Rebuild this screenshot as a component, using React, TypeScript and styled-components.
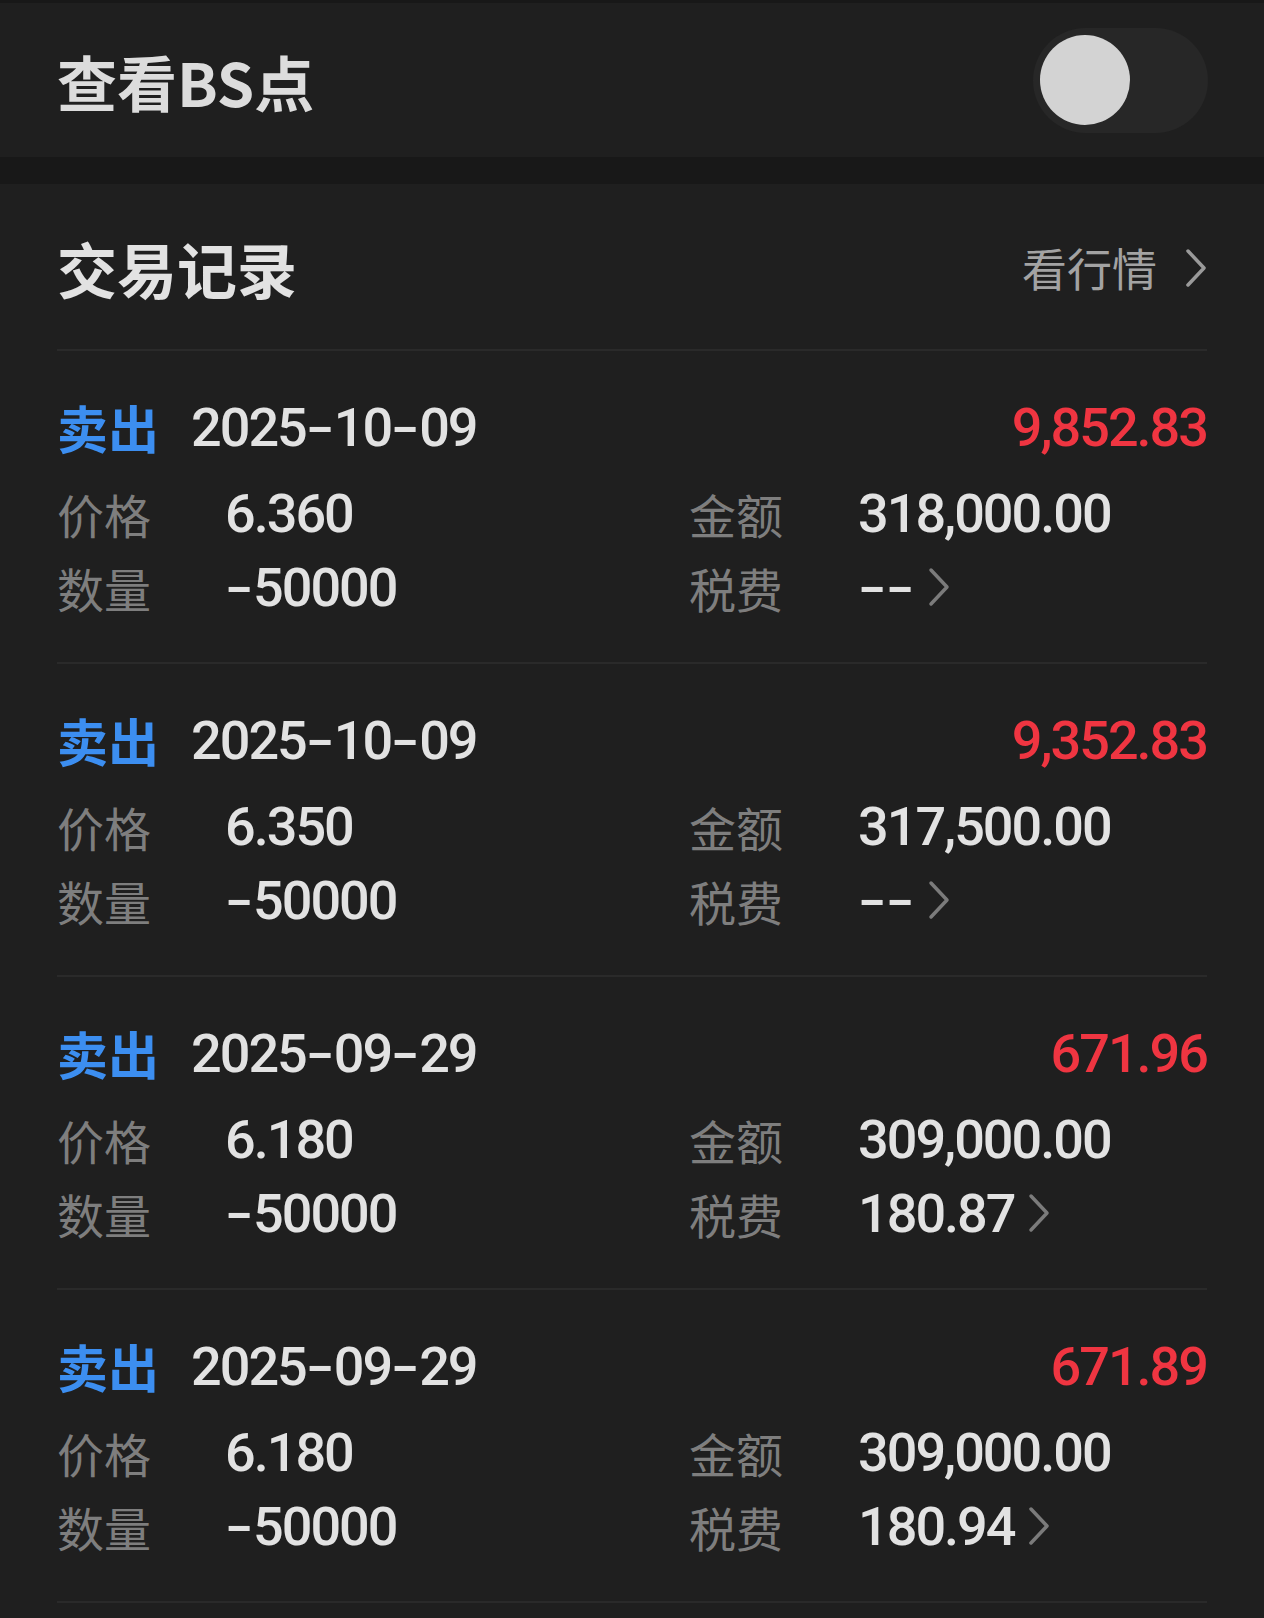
import React, { useState } from 'react';
import styled, { createGlobalStyle } from 'styled-components';

const GlobalStyle = createGlobalStyle`
  html, body {
    margin: 0;
    padding: 0;
    background-color: #1f1f1f;
  }
  * {
    box-sizing: border-box;
  }
`;

const cjk = `"Noto Sans CJK SC", "Noto Sans", sans-serif`;
const num = `Roboto, "Noto Sans CJK SC", sans-serif`;

const Page = styled.div`
  width: 1264px;
  background-color: #1f1f1f;
  font-family: ${cjk};
`;

const SettingBar = styled.div`
  display: flex;
  justify-content: space-between;
  align-items: center;
  height: 157px;
  padding: 0 56px 0 57px;
  border-top: 3px solid #181818;
  background-color: #1f1f1f;
`;

const SettingTitle = styled.span`
  font-size: 60px;
  font-weight: 700;
  color: #dcdcdc;
`;

const SwitchTrack = styled.button<{ $on: boolean }>`
  display: flex;
  align-items: center;
  justify-content: ${(props) => (props.$on ? 'flex-end' : 'flex-start')};
  width: 175px;
  height: 105px;
  padding: 0 7px;
  border: none;
  border-radius: 53px;
  background-color: ${(props) => (props.$on ? '#3c8ef0' : '#272727')};
  cursor: pointer;
`;

const SwitchKnob = styled.span`
  width: 90px;
  height: 90px;
  border-radius: 50%;
  background-color: #d3d3d3;
`;

const Gap = styled.div`
  height: 27px;
  background-color: #181818;
`;

const Card = styled.div`
  padding: 0 57px;
  background-color: #1f1f1f;
`;

const CardHeader = styled.div`
  display: flex;
  justify-content: space-between;
  align-items: center;
  height: 167px;
  padding-top: 2px;
  border-bottom: 2px solid #2a2a2a;
`;

const CardTitle = styled.span`
  font-size: 60px;
  font-weight: 700;
  color: #e2e2e2;
`;

const MoreLink = styled.a`
  display: flex;
  align-items: center;
  gap: 28px;
  font-size: 45px;
  color: #a3a3a3;
  cursor: pointer;
`;

const Record = styled.div`
  padding: 40px 0 38px;
  border-bottom: 2px solid #2a2a2a;
`;

const TitleRow = styled.div`
  display: flex;
  align-items: center;
  height: 72px;
  margin-bottom: 13px;
`;

const Side = styled.span`
  font-size: 51px;
  font-weight: 700;
  color: #3c8ef0;
  margin-right: 32px;
`;

const Num = styled.span<{ $color?: string }>`
  font-family: ${num};
  font-size: 54px;
  font-weight: 500;
  letter-spacing: -2px;
  color: ${(props) => props.$color || '#e2e2e2'};
  white-space: nowrap;
`;

// hyphens in the app's number font are about as wide as a digit
const DashSlot = styled.span`
  display: inline-block;
  width: 28px;
  text-align: center;
  letter-spacing: 0;
`;

const DashGlyph = styled.span`
  display: inline-block;
  transform: scaleX(1.5);
`;

const Profit = styled(Num)`
  margin-left: auto;
`;

const InfoGrid = styled.div`
  display: grid;
  grid-template-columns: 168px 464px 169px 1fr;
  grid-auto-rows: 74px;
  align-items: center;
`;

const Label = styled.span`
  font-size: 47px;
  color: #7e7e7e;
`;

const Value = styled.span`
  display: flex;
  align-items: center;
`;

const Chevron = ({ color, margin }: { color: string; margin: number }) => (
  <svg
    width="22"
    height="40"
    viewBox="0 0 22 40"
    style={{ marginLeft: margin }}
    fill="none"
  >
    <polyline
      points="3,3 19,20 3,37"
      stroke={color}
      strokeWidth="3.5"
      strokeLinejoin="round"
      strokeLinecap="round"
    />
  </svg>
);

const NumText = ({ text, color }: { text: string; color?: string }) => {
  const parts = text.split('-');
  return (
    <Num $color={color}>
      {parts.map((p, i) => (
        <React.Fragment key={i}>
          {i > 0 && (
            <DashSlot>
              <DashGlyph>-</DashGlyph>
            </DashSlot>
          )}
          {p}
        </React.Fragment>
      ))}
    </Num>
  );
};

const records = [
  { date: '2025-10-09', profit: '9,852.83', price: '6.360', amount: '318,000.00', qty: '-50000', fee: '--' },
  { date: '2025-10-09', profit: '9,352.83', price: '6.350', amount: '317,500.00', qty: '-50000', fee: '--' },
  { date: '2025-09-29', profit: '671.96', price: '6.180', amount: '309,000.00', qty: '-50000', fee: '180.87' },
  { date: '2025-09-29', profit: '671.89', price: '6.180', amount: '309,000.00', qty: '-50000', fee: '180.94' },
];

const App = () => {
  const [showBS, setShowBS] = useState(false);

  return (
    <Page>
      <GlobalStyle />
      <SettingBar>
        <SettingTitle>查看BS点</SettingTitle>
        <SwitchTrack $on={showBS} onClick={() => setShowBS((prev) => !prev)}>
          <SwitchKnob />
        </SwitchTrack>
      </SettingBar>
      <Gap />
      <Card>
        <CardHeader>
          <CardTitle>交易记录</CardTitle>
          <MoreLink>
            看行情
            <Chevron color="#9a9a9a" margin={0} />
          </MoreLink>
        </CardHeader>
        {records.map((r, idx) => (
          <Record key={idx}>
            <TitleRow>
              <Side>卖出</Side>
              <NumText text={r.date} />
              <Profit $color="#ef3541">{r.profit}</Profit>
            </TitleRow>
            <InfoGrid>
              <Label>价格</Label>
              <Value>
                <NumText text={r.price} />
              </Value>
              <Label>金额</Label>
              <Value>
                <NumText text={r.amount} />
              </Value>
              <Label>数量</Label>
              <Value>
                <NumText text={r.qty} />
              </Value>
              <Label>税费</Label>
              <Value>
                <NumText text={r.fee} />
                <Chevron color="#7b7b7b" margin={14} />
              </Value>
            </InfoGrid>
          </Record>
        ))}
      </Card>
    </Page>
  );
};

export default App;
